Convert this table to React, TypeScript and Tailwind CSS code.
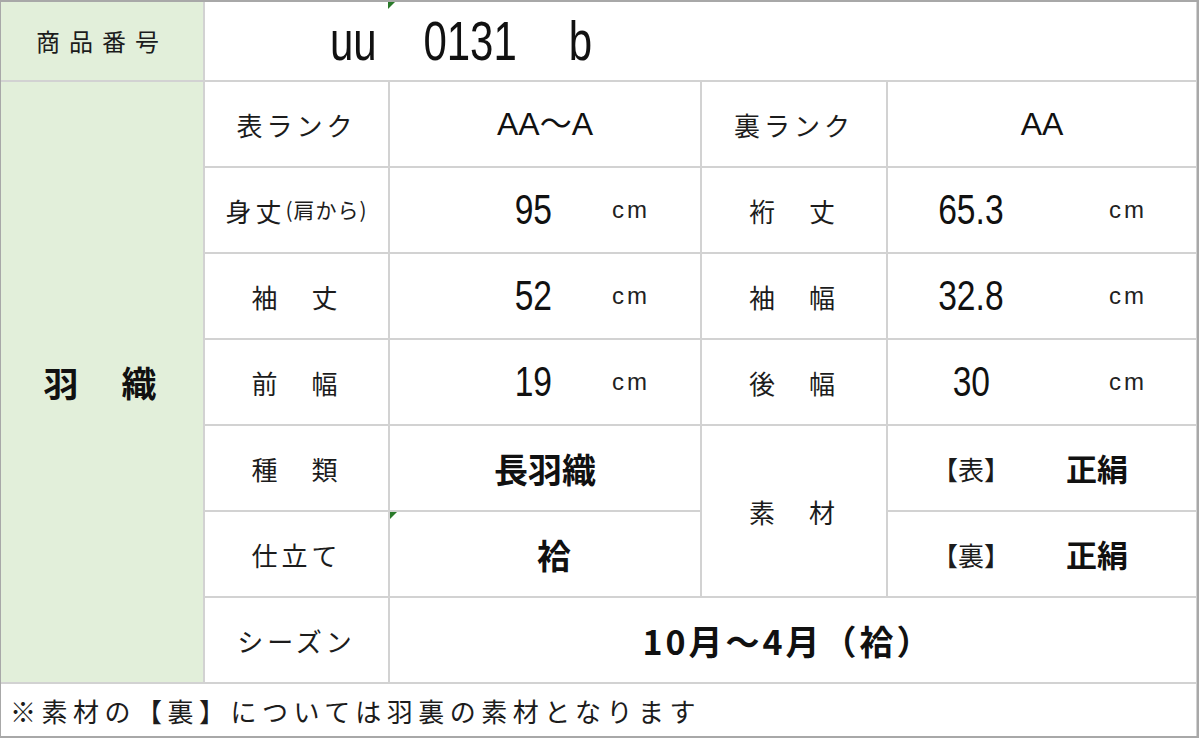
const jp = "font-['Noto_Sans_CJK_JP',sans-serif]";
const num = "font-['Liberation_Sans','Noto_Sans_CJK_JP',sans-serif]";

function Label({ children }: { children: React.ReactNode }) {
  return (
    <div className={`bg-white flex items-center justify-center text-[26px] tracking-[4px] text-[#1c1c1c] ${jp}`}>
      {children}
    </div>
  );
}

function NumCell({ value, wide }: { value: string; wide?: boolean }) {
  // wide = right-hand value column (different sub-column positions)
  return (
    <div className="bg-white flex items-center">
      <div className={wide ? "ml-[33px] w-[100px] text-center" : "ml-[103px] w-[80px] text-center"}>
        <span className={`inline-block scale-x-80 text-[42px] leading-none text-[#111] ${num}`}>{value}</span>
      </div>
      <div className={wide ? "ml-[77px] w-[60px] text-center" : "ml-[28px] w-[60px] text-center"}>
        <span className={`text-[24px] tracking-[3px] text-[#222] ${num}`}>cm</span>
      </div>
    </div>
  );
}

function Material({ side }: { side: string }) {
  return (
    <div className="bg-white flex items-center">
      <div className={`ml-[33px] w-[100px] text-center text-[26px] text-[#1c1c1c] ${jp}`}>【{side}】</div>
      <div className={`ml-[36px] w-[80px] text-center text-[31px] font-bold text-[#111] ${jp}`}>正絹</div>
    </div>
  );
}

function Flag() {
  return <div className="w-0 h-0 border-t-[7px] border-r-[7px] border-t-[#2a7a2a] border-r-transparent" />;
}

export default function App() {
  return (
    <div className="w-[1200px] h-[738px] bg-white">
      <div className="w-[1199px] grid grid-cols-[202px_183px_310px_184px_308px] grid-rows-[78px_repeat(7,84px)_52px] gap-[2px] bg-[#d2d2d2] border-t-2 border-r-2 border-b-2 border-l border-[#a8a8a8]">
        {/* 商品番号 */}
        <div className={`bg-[#e2efda] flex items-center justify-center text-[24px] tracking-[9px] text-[#1c1c1c] ${jp}`}>
          商品番号
        </div>
        <div className="col-span-4 bg-white flex items-center relative pl-[125px]">
          <div className="absolute left-[183px] top-0">
            <Flag />
          </div>
          <span className={`inline-block origin-left scale-x-75 whitespace-pre text-[56px] leading-none text-[#111] ${num}`}>
            uu    0131    <span className="ml-[7px]">b</span>
          </span>
        </div>

        {/* 羽織 */}
        <div className={`col-start-1 row-start-2 row-span-7 bg-[#e2efda] flex items-center justify-center text-[35px] tracking-[4px] font-bold text-[#111] ${jp}`}>
          羽　織
        </div>

        {/* 素材 */}
        <div className={`col-start-4 row-start-6 row-span-2 bg-white flex items-center justify-center text-[26px] tracking-[4px] text-[#1c1c1c] ${jp}`}>
          素　材
        </div>

        {/* rank row */}
        <Label>表ランク</Label>
        <div className="bg-white flex items-center justify-center">
          <span className={`text-[32px] text-[#111] ${num}`}>AA～A</span>
        </div>
        <Label>裏ランク</Label>
        <div className="bg-white flex items-center justify-center">
          <span className={`text-[32px] text-[#111] ${num}`}>AA</span>
        </div>

        {/* measurements */}
        <Label>
          身丈<span className="text-[21px] tracking-[1px]">(肩から)</span>
        </Label>
        <NumCell value="95" />
        <Label>裄　丈</Label>
        <NumCell value="65.3" wide />

        <Label>袖　丈</Label>
        <NumCell value="52" />
        <Label>袖　幅</Label>
        <NumCell value="32.8" wide />

        <Label>前　幅</Label>
        <NumCell value="19" />
        <Label>後　幅</Label>
        <NumCell value="30" wide />

        {/* type / material */}
        <Label>種　類</Label>
        <div className={`bg-white flex items-center justify-center text-[34px] font-bold text-[#111] ${jp}`}>長羽織</div>
        <Material side="表" />

        <Label>仕立て</Label>
        <div className={`bg-white flex items-center justify-center pl-[18px] text-[34px] font-bold text-[#111] relative ${jp}`}>
          <div className="absolute left-0 top-0">
            <Flag />
          </div>
          袷
        </div>
        <Material side="裏" />

        {/* season */}
        <Label>シーズン</Label>
        <div className={`col-span-3 bg-white flex items-center justify-center pr-[10px] text-[34px] font-bold tracking-[3px] text-[#111] ${jp}`}>
          10月～4月（袷）
        </div>

        {/* note */}
        <div className={`col-span-5 bg-white flex items-center pl-[9px] text-[26px] tracking-[5.5px] text-[#1c1c1c] ${jp}`}>
          ※素材の【裏】については羽裏の素材となります
        </div>
      </div>
    </div>
  );
}
